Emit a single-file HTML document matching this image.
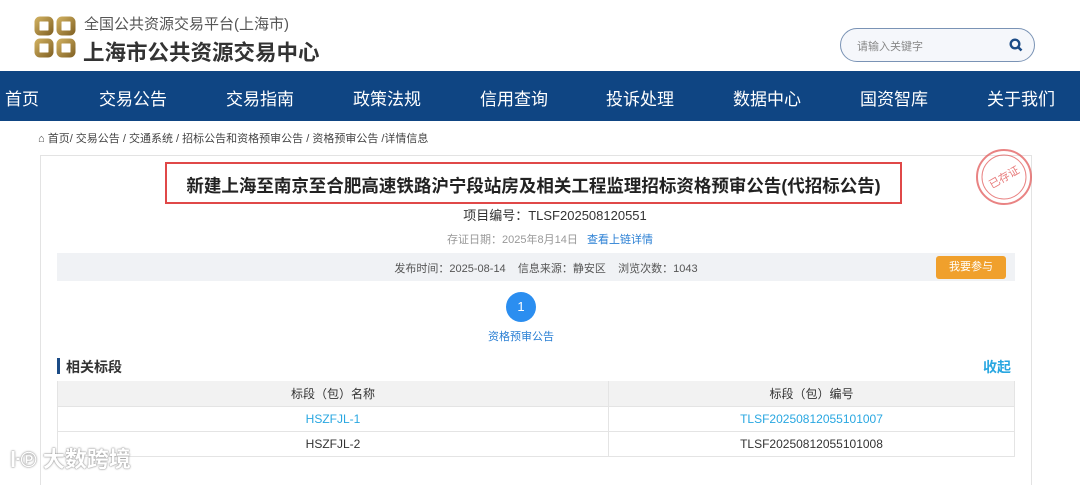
<!DOCTYPE html><html><head><meta charset="utf-8"><style>
*{margin:0;padding:0;box-sizing:border-box}
body{width:1080px;height:476px;overflow:hidden;background:#fff;font-family:"Liberation Sans","Noto Sans CJK SC",sans-serif;position:relative;color:#333}
.a{position:absolute}
.nav{top:71px;left:0;width:1080px;height:50px;background:#0f4583}
.nav span{position:absolute;top:14px;color:#fff;font-size:17px;transform:translateX(-50%);white-space:nowrap}
table{border-collapse:collapse;width:958px;font-size:12px}
td{height:25px;text-align:center;border-bottom:1px solid #e4e4e4;border-right:1px solid #e4e4e4}
</style></head><body>
<svg class="a" style="left:34px;top:16px" width="42" height="42" viewBox="0 0 42 42"><defs><linearGradient id="g" x1="0" y1="0" x2="1" y2="1"><stop offset="0" stop-color="#c9a95a"/><stop offset="1" stop-color="#8a6a2a"/></linearGradient></defs><g fill="none" stroke="url(#g)" stroke-width="5"><rect x="3" y="3" width="14" height="14" rx="3"/><rect x="25" y="3" width="14" height="14" rx="3"/><rect x="3" y="25" width="14" height="14" rx="3"/><rect x="25" y="25" width="14" height="14" rx="3"/></g></svg>
<div class="a" style="left:84px;top:13px;font-size:15px;color:#555">全国公共资源交易平台(上海市)</div>
<div class="a" style="left:83px;top:36px;font-size:21.5px;font-weight:bold;color:#333">上海市公共资源交易中心</div>
<div class="a" style="left:840px;top:28px;width:195px;height:34px;border:1.5px solid #7a93b5;border-radius:17px;background:#f5f7fb"><span class="a" style="left:16px;top:9px;font-size:11px;color:#888">请输入关键字</span>
<svg class="a" style="left:168px;top:9px" width="14" height="14" viewBox="0 0 14 14"><circle cx="6" cy="6" r="4.3" fill="none" stroke="#1b4b86" stroke-width="2.4"/><path d="M9 9l3.5 3.5" stroke="#1b4b86" stroke-width="2.6"/></svg></div>
<div class="a nav"><span style="left:22px">首页</span><span style="left:133px">交易公告</span><span style="left:260px">交易指南</span><span style="left:387px">政策法规</span><span style="left:514px">信用查询</span><span style="left:640px">投诉处理</span><span style="left:767px">数据中心</span><span style="left:894px">国资智库</span><span style="left:1021px">关于我们</span></div>
<div class="a" style="left:38px;top:130px;font-size:11px;color:#444">⌂ 首页/ 交易公告 / 交通系统 / 招标公告和资格预审公告 / 资格预审公告 /详情信息</div>
<div class="a" style="left:40px;top:155px;width:992px;height:330px;border:1px solid #e3e3e3;border-bottom:none"></div>
<div class="a" style="left:165px;top:162px;width:737px;height:42px;border:2.5px solid #e04848"></div>
<div class="a" style="left:165px;top:173px;width:737px;text-align:center;font-size:17.5px;font-weight:bold;color:#222">新建上海至南京至合肥高速铁路沪宁段站房及相关工程监理招标资格预审公告(代招标公告)</div>
<svg class="a" style="left:975px;top:148px" width="58" height="58" viewBox="0 0 58 58"><g fill="none" stroke="#e25a5a" opacity=".75"><circle cx="29" cy="29" r="27" stroke-width="2"/><circle cx="29" cy="29" r="22" stroke-width="1"/></g><text x="29" y="33" text-anchor="middle" font-size="11" fill="#e25a5a" opacity=".8" transform="rotate(-30 29 29)">已存证</text></svg>
<div class="a" style="left:0;width:1080px;top:205px;text-align:center;font-size:13px;color:#333;padding-left:30px">项目编号：TLSF202508120551</div>
<div class="a" style="left:0;width:1080px;top:231px;text-align:center;font-size:11px;color:#999;padding-left:20px">存证日期：2025年8月14日 &nbsp; <span style="color:#2a7fd4">查看上链详情</span></div>
<div class="a" style="left:57px;top:253px;width:958px;height:28px;background:#f0f2f5"></div>
<div class="a" style="left:0;width:1080px;top:260px;text-align:center;font-size:11px;color:#555;padding-left:12px">发布时间：2025-08-14 &nbsp;&nbsp; 信息来源：静安区 &nbsp;&nbsp; 浏览次数：1043</div>
<div class="a" style="left:936px;top:256px;width:70px;height:23px;background:#f0a02c;border-radius:3px;color:#fff;font-size:11px;text-align:center;line-height:23px">我要参与</div>
<div class="a" style="left:506px;top:292px;width:30px;height:30px;border-radius:50%;background:#2b8ef0;color:#fff;font-size:13px;text-align:center;line-height:30px">1</div>
<div class="a" style="left:471px;top:328px;width:100px;text-align:center;font-size:11px;color:#2a7fd4">资格预审公告</div>
<div class="a" style="left:57px;top:358px;width:3px;height:16px;background:#1b4b86"></div>
<div class="a" style="left:66px;top:357px;font-size:14px;font-weight:bold;color:#333">相关标段</div>
<div class="a" style="left:983px;top:357px;font-size:14px;font-weight:bold;color:#29a7e1">收起</div>
<table class="a" style="left:57px;top:381px;border-left:1px solid #e4e4e4">
<tr style="background:#f2f2f2"><td style="width:551px">标段（包）名称</td><td>标段（包）编号</td></tr>
<tr><td style="color:#29a7e1">HSZFJL-1</td><td style="color:#29a7e1">TLSF20250812055101007</td></tr>
<tr><td>HSZFJL-2</td><td>TLSF20250812055101008</td></tr></table>
<div class="a" style="left:10px;top:442px;font-size:22px;color:#fff;font-weight:bold;text-shadow:0 0 2px #888,0 0 1px #666;opacity:.9">ŀ℗ 大数跨境</div>
</body></html>
